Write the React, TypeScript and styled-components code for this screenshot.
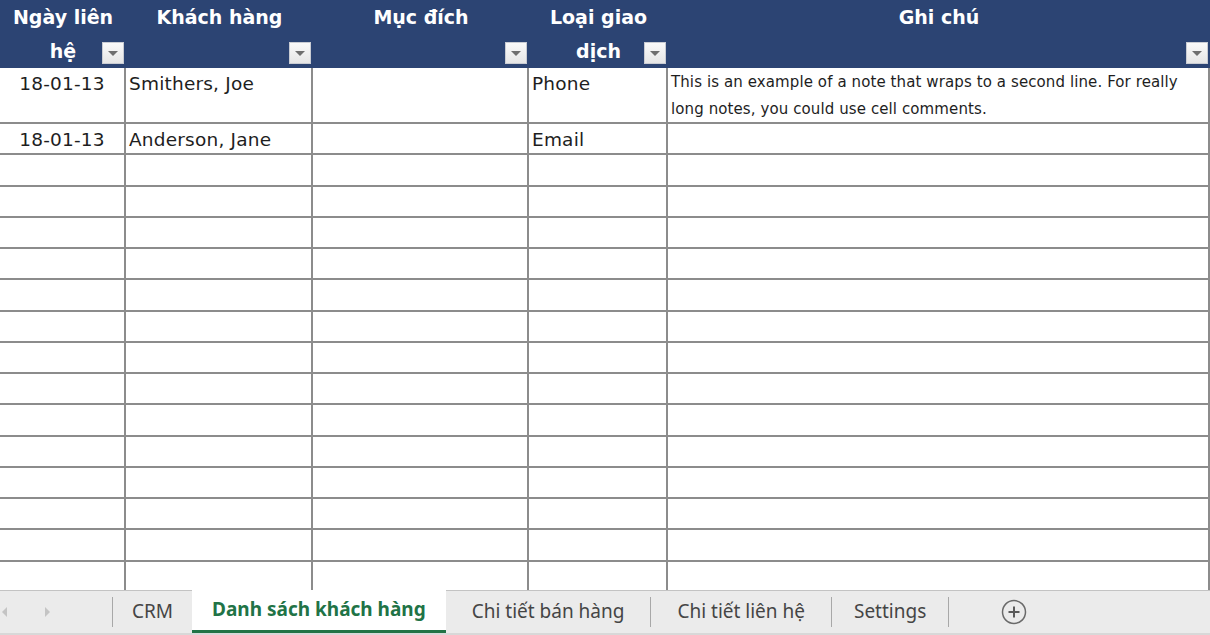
import React from 'react';
import styled, { createGlobalStyle } from 'styled-components';

const GlobalStyle = createGlobalStyle`
  html, body {
    margin: 0;
    padding: 0;
    background: #ffffff;
  }
  body {
    width: 1210px;
    height: 635px;
    overflow: hidden;
    font-family: "DejaVu Sans", Verdana, sans-serif;
  }
`;

interface Row {
  date: string;
  customer: string;
  purpose: string;
  kind: string;
  note: string;
}

const rows: Row[] = [
  {
    date: '18-01-13',
    customer: 'Smithers, Joe',
    purpose: '',
    kind: 'Phone',
    note: 'This is an example of a note that wraps to a second line. For really long notes, you could use cell comments.',
  },
  { date: '18-01-13', customer: 'Anderson, Jane', purpose: '', kind: 'Email', note: '' },
];

const EMPTY_ROWS = 16;

const Page = styled.div`
  width: 1210px;
  height: 635px;
  display: flex;
  flex-direction: column;
`;

const Sheet = styled.div`
  height: 590px;
  overflow: hidden;
  display: grid;
  grid-template-columns: 126px 187px 216px 139px 1fr;
  grid-template-rows: 68px 56px;
  grid-auto-rows: 31.25px;
`;

const HeadCell = styled.div`
  position: relative;
  background: #2c4473;
  color: #ffffff;
  font-weight: bold;
  font-size: 19px;
  line-height: 34px;
  text-align: center;
`;

const FilterButton = styled.div`
  position: absolute;
  right: 2px;
  bottom: 4px;
  width: 22px;
  height: 22px;
  box-sizing: border-box;
  background: linear-gradient(#fafafa, #e6e6e6);
  border: 1px solid #c9ccd3;
  display: flex;
  align-items: center;
  justify-content: center;

  &::after {
    content: '';
    border-left: 5px solid transparent;
    border-right: 5px solid transparent;
    border-top: 5px solid #6f6f6f;
    margin-top: 1px;
  }
`;

const Cell = styled.div<{ $align?: 'left' | 'center'; $small?: boolean }>`
  box-sizing: border-box;
  border-right: 2px solid #8c8c8c;
  border-bottom: 2px solid #8c8c8c;
  color: #1e1e1e;
  font-size: ${(p) => (p.$small ? '15px' : '18.5px')};
  line-height: ${(p) => (p.$small ? '27px' : '29px')};
  letter-spacing: ${(p) => (p.$small ? '0.1px' : '0.2px')};
  padding: 1px 3px 0 3px;
  text-align: ${(p) => p.$align ?? 'left'};
  overflow: hidden;
`;

const TabBar = styled.div`
  height: 45px;
  box-sizing: border-box;
  background: #ebebeb;
  border-top: 1px solid #c3c3c3;
  border-bottom: 2px solid #d8d8d8;
  display: flex;
  align-items: stretch;
  font-family: "Noto Sans", "Open Sans", sans-serif;
`;

const Nav = styled.div`
  width: 112px;
  display: flex;
  align-items: center;
  gap: 38px;
  padding-left: 2px;
  box-sizing: border-box;
`;

const Arrow = styled.span<{ $dir: 'left' | 'right' }>`
  width: 0;
  height: 0;
  border-top: 5px solid transparent;
  border-bottom: 5px solid transparent;
  ${(p) => (p.$dir === 'left' ? 'border-right: 5px solid #c4c4c4;' : 'border-left: 5px solid #c4c4c4;')}
`;

const Divider = styled.span`
  width: 1px;
  align-self: center;
  height: 30px;
  background: #a8a8a8;
`;

const Tab = styled.div<{ $active?: boolean; $pad: number }>`
  display: flex;
  align-items: center;
  padding: 0 ${(p) => p.$pad}px 3px;
  font-size: 19px;
  color: ${(p) => (p.$active ? '#217346' : '#454545')};
  font-weight: ${(p) => (p.$active ? 700 : 400)};
  background: ${(p) => (p.$active ? '#ffffff' : 'transparent')};
  border-bottom: ${(p) => (p.$active ? '3px solid #217346' : '0')};
  margin-top: ${(p) => (p.$active ? '-1px' : '0')};
  box-sizing: border-box;
  white-space: nowrap;
`;

const AddTab = styled.div`
  display: flex;
  align-items: center;
  padding-left: 52px;
`;

const headers: { label: React.ReactNode }[] = [
  { label: <>Ngày liên<br />hệ</> },
  { label: 'Khách hàng' },
  { label: 'Mục đích' },
  { label: <>Loại giao<br />dịch</> },
  { label: 'Ghi chú' },
];

const tabs = [
  { name: 'CRM', pad: 19 },
  { name: 'Danh sách khách hàng', pad: 20, active: true },
  { name: 'Chi tiết bán hàng', pad: 26 },
  { name: 'Chi tiết liên hệ', pad: 26 },
  { name: 'Settings', pad: 22 },
];

const App: React.FC = () => {
  const empty: Row = { date: '', customer: '', purpose: '', kind: '', note: '' };
  const all = [...rows, ...Array.from({ length: EMPTY_ROWS }, () => empty)];

  return (
    <Page>
      <GlobalStyle />
      <Sheet>
        {headers.map((h, i) => (
          <HeadCell key={i}>
            {h.label}
            <FilterButton />
          </HeadCell>
        ))}
        {all.map((r, i) => (
          <React.Fragment key={i}>
            <Cell $align="center">{r.date}</Cell>
            <Cell>{r.customer}</Cell>
            <Cell>{r.purpose}</Cell>
            <Cell>{r.kind}</Cell>
            <Cell $small>{r.note}</Cell>
          </React.Fragment>
        ))}
      </Sheet>
      <TabBar>
        <Nav>
          <Arrow $dir="left" />
          <Arrow $dir="right" />
        </Nav>
        <Divider />
        {tabs.map((t, i) => (
          <React.Fragment key={t.name}>
            <Tab $active={t.active} $pad={t.pad}>{t.name}</Tab>
            {!t.active && !tabs[i + 1]?.active && <Divider />}
          </React.Fragment>
        ))}
        <AddTab>
          <svg width="26" height="26" viewBox="0 0 26 26">
            <circle cx="13" cy="13" r="11.5" fill="none" stroke="#6a6a6a" strokeWidth="1.5" />
            <path d="M13 7.5v11M7.5 13h11" stroke="#5a5a5a" strokeWidth="2" />
          </svg>
        </AddTab>
      </TabBar>
    </Page>
  );
};

export default App;
